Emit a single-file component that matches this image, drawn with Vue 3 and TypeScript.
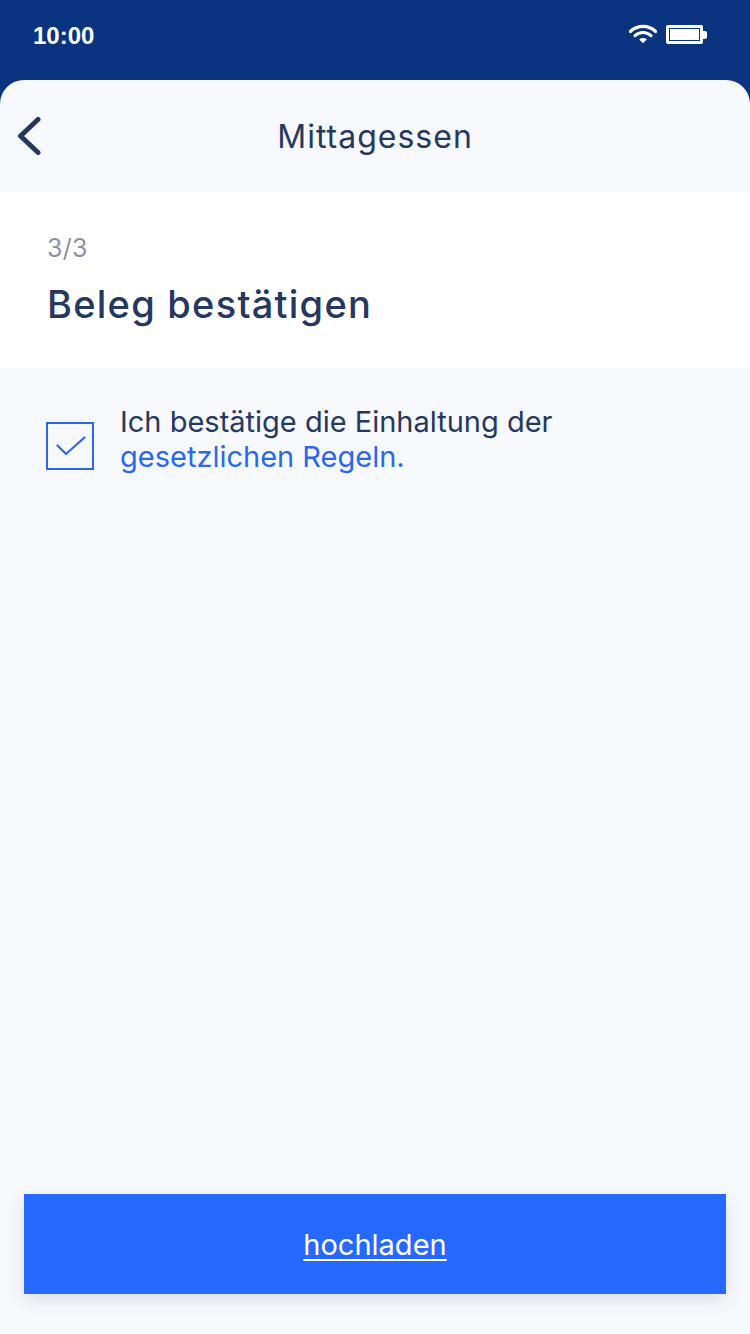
<script setup lang="ts">
const title: string = 'Mittagessen'
</script>

<template>
  <div class="page">
    <div class="status">
      <span class="time">10:00</span>
      <div class="status-icons">
        <svg class="wifi" width="28" height="20" viewBox="0 0 28 20">
          <path d="M1.5 7.4a18 18 0 0 1 25 0" fill="none" stroke="#fff" stroke-width="3.4" stroke-linecap="round" />
          <path d="M6 11.6a11.6 11.6 0 0 1 16 0" fill="none" stroke="#fff" stroke-width="3" stroke-linecap="round" />
          <path d="M10.2 15.4a5.6 5.6 0 0 1 7.6 0L14 19.2z" fill="#fff" />
        </svg>
        <div class="battery">
          <div class="battery-fill"></div>
        </div>
        <div class="battery-cap"></div>
      </div>
    </div>
    <div class="sheet">
      <header class="nav">
        <svg class="back" width="24" height="40" viewBox="0 0 24 40">
          <path d="M21 3.5 3.5 20 21 36.5" fill="none" stroke="#25395f" stroke-width="5" stroke-linecap="round" stroke-linejoin="round" />
        </svg>
        <h1 class="nav-title">{{ title }}</h1>
      </header>
      <section class="intro">
        <div class="step">3/3</div>
        <h2 class="heading">Beleg bestätigen</h2>
      </section>
      <div class="confirm">
        <div class="checkbox">
          <svg width="32" height="26" viewBox="0 0 32 26">
            <path d="M3.5 12.5 12 21 30.5 4.5" fill="none" stroke="#2a69e6" stroke-width="2.2" stroke-linecap="round" stroke-linejoin="round" />
          </svg>
        </div>
        <p class="confirm-text">Ich bestätige die Einhaltung der<br /><a class="link">gesetzlichen Regeln.</a></p>
      </div>
      <div class="footer">
        <button class="upload" type="button">hochladen</button>
      </div>
    </div>
  </div>
</template>

<style scoped>
.page {
  width: 750px;
  height: 1334px;
  display: flex;
  flex-direction: column;
  background: #0a3480;
  font-family: Inter, "Liberation Sans", sans-serif;
  overflow: hidden;
}
.status {
  height: 80px;
  flex: none;
  display: flex;
  justify-content: space-between;
  padding: 22px 43px 0 33px;
  box-sizing: border-box;
}
.time {
  font-family: "Liberation Sans", Arial, sans-serif;
  font-weight: 700;
  font-size: 24px;
  line-height: 28px;
  color: #fff;
}
.status-icons {
  display: flex;
  align-items: flex-start;
  height: 24px;
}
.wifi {
  margin: 2px 9px 0 0;
}
.battery {
  width: 37px;
  height: 19px;
  margin-top: 3px;
  border: 3px solid #fff;
  border-radius: 2px;
  box-sizing: border-box;
  padding: 1px;
}
.battery-fill {
  width: 100%;
  height: 100%;
  background: #fff;
}
.battery-cap {
  width: 4px;
  height: 8px;
  margin-top: 9px;
  background: #fff;
  border-radius: 0 2px 2px 0;
}
.sheet {
  flex: 1;
  display: flex;
  flex-direction: column;
  background: #f7f8fc;
  border-radius: 24px 24px 0 0;
}
.nav {
  height: 112px;
  flex: none;
  display: flex;
  align-items: center;
  justify-content: center;
  position: relative;
}
.back {
  position: absolute;
  left: 17px;
  top: 36px;
}
.nav-title {
  margin: 0;
  font-size: 32px;
  font-weight: 400;
  letter-spacing: 1px;
  color: #25395f;
}
.intro {
  height: 176px;
  flex: none;
  box-sizing: border-box;
  padding: 41px 47px 0;
  background: #fff;
}
.step {
  font-size: 25px;
  line-height: 30px;
  letter-spacing: 0.3px;
  color: #8a92a3;
}
.heading {
  margin: 17px 0 0;
  font-size: 38px;
  line-height: 48px;
  font-weight: 500;
  letter-spacing: 1.25px;
  color: #25395f;
}
.confirm {
  display: flex;
  align-items: flex-start;
  padding: 36px 46px 0;
}
.checkbox {
  width: 48px;
  height: 48px;
  flex: none;
  box-sizing: border-box;
  border: 2px solid #2a69e6;
  display: flex;
  align-items: center;
  justify-content: center;
  margin: 18px 26px 0 0;
}
.confirm-text {
  margin: 0;
  font-size: 29px;
  line-height: 35px;
  color: #25395f;
}
.link {
  color: #2869f0;
}
.footer {
  margin-top: auto;
  padding: 0 24px 40px;
}
.upload {
  display: block;
  width: 100%;
  height: 100px;
  border: none;
  background: #2569ff;
  color: #fff;
  font-family: inherit;
  font-size: 29px;
  text-decoration: underline;
  text-underline-offset: 4px;
  box-shadow: 0 6px 16px rgba(37, 57, 95, 0.12);
}
</style>
